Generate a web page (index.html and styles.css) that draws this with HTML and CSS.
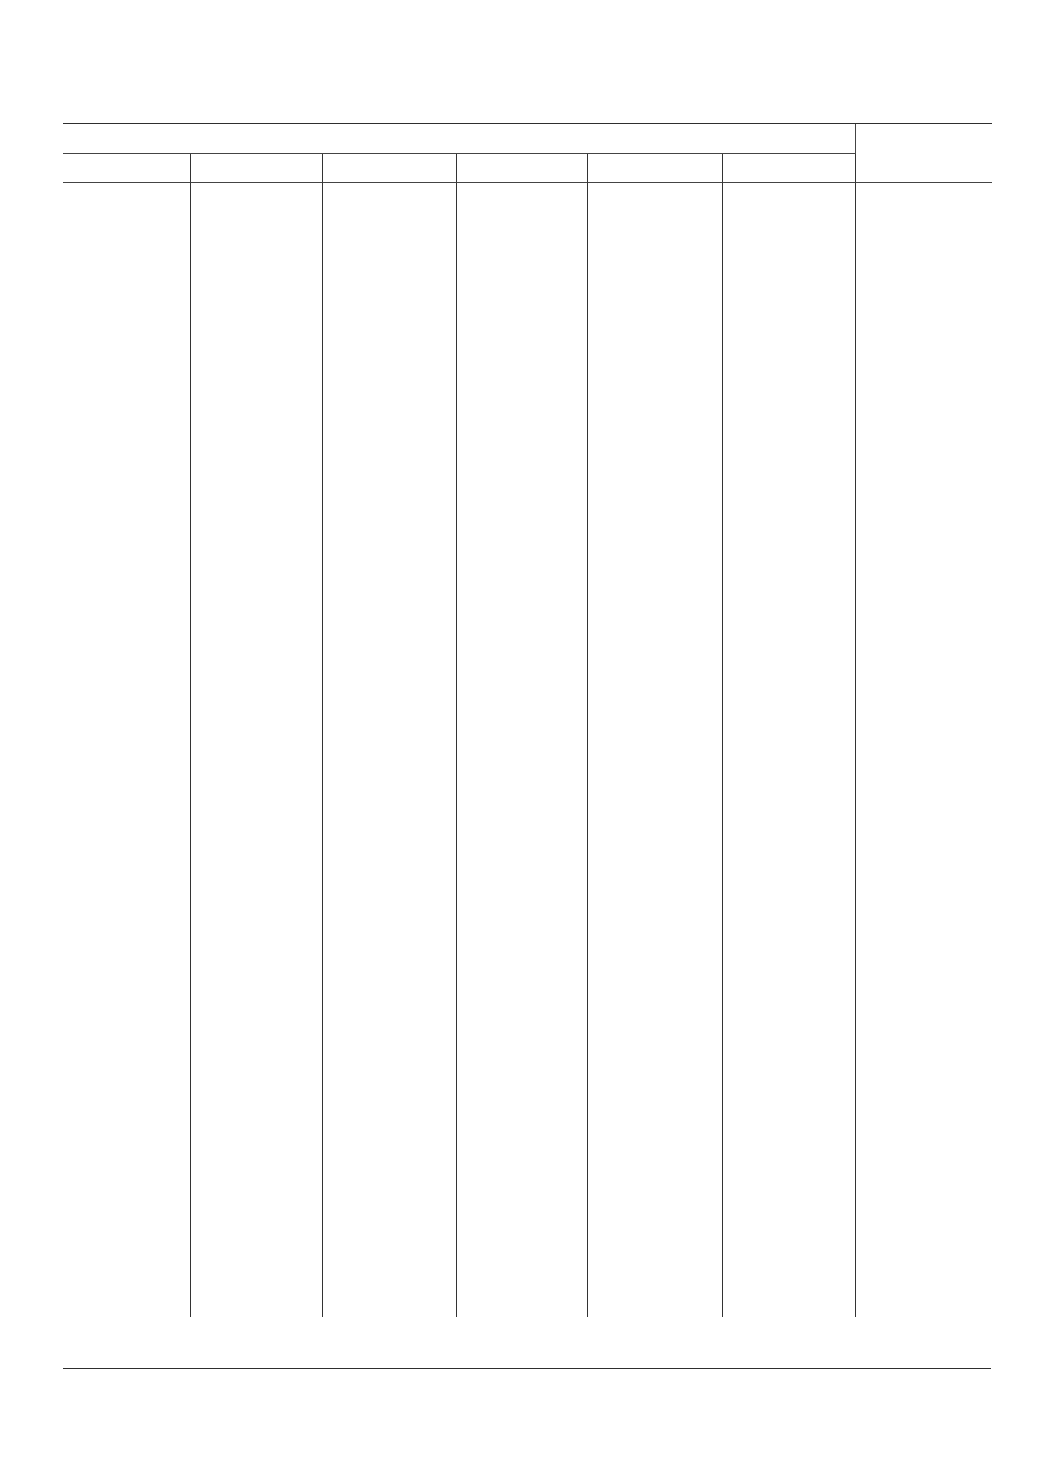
FILE: index.html
```html
<!DOCTYPE html>
<html>
<head>
<meta charset="utf-8">
<link rel="stylesheet" href="styles.css">
</head>
<body>
<div class="page">
  <div class="grid">
    <div class="head-span"></div>
    <div class="head-right"></div>
    <div class="sub c"></div>
    <div class="sub c"></div>
    <div class="sub c"></div>
    <div class="sub c"></div>
    <div class="sub c"></div>
    <div class="sub c"></div>
    <div class="body c"></div>
    <div class="body c"></div>
    <div class="body c"></div>
    <div class="body c"></div>
    <div class="body c"></div>
    <div class="body c"></div>
    <div class="body last"></div>
  </div>
  <div class="footer-rule"></div>
</div>
</body>
</html>
```

FILE: styles.css
```css
html, body {
  margin: 0;
  padding: 0;
  background: #fff;
  font-family: "Liberation Sans", Arial, sans-serif;
}
.page {
  padding-top: 123px;
  padding-left: 63px;
}
.grid {
  display: grid;
  width: 929px;
  grid-template-columns: 128px 132px 134px 131px 135px 133px 136px;
  grid-template-rows: 30px 29px 1134px;
  border-top: 1px solid #2e2e2e;
}
.grid > div {
  box-sizing: border-box;
}
.head-span {
  grid-column: 1 / 7;
  grid-row: 1;
  border-bottom: 1px solid #444;
  border-right: 1px solid #444;
}
.head-right {
  grid-column: 7;
  grid-row: 1 / 3;
  border-bottom: 1px solid #444;
}
.sub {
  grid-row: 2;
  border-bottom: 1px solid #444;
}
.c {
  border-right: 1px solid #333;
}
.body {
  grid-row: 3;
}
.footer-rule {
  width: 928px;
  margin-top: 51px;
  border-top: 1px solid #2e2e2e;
}
```
